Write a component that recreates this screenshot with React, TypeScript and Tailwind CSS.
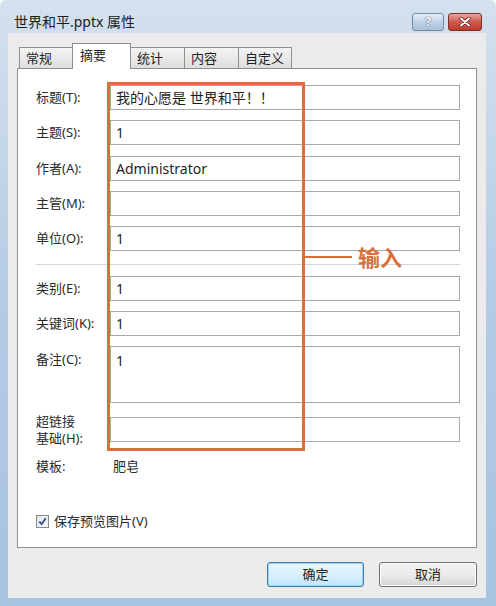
import React from "react";

const font = "font-['Noto_Sans','Noto_Sans_CJK_SC',sans-serif]";

// 一行：标签 + 输入框
const Field = ({
  label,
  value,
  tall,
}: {
  label: React.ReactNode;
  value?: string;
  tall?: boolean;
}) => (
  <div className={`flex ${tall ? "items-start" : "h-[25px] items-center"}`}>
    <div className={`w-[74px] shrink-0 text-[13px] leading-[17px] text-[#2a2a2a] ${tall ? "pt-[5px]" : ""}`}>
      {label}
    </div>
    <div
      className={`w-[350px] ${tall ? "h-[57px] items-start pt-[3px]" : "h-[25px] items-center"} flex shrink-0 border border-[#a8a8a8] bg-white px-[5px] text-[14px] text-[#1e1e1e]`}
    >
      {value}
    </div>
  </div>
);

const Tab = ({ label, active, w }: { label: string; active?: boolean; w: string }) =>
  active ? (
    <div
      className={`${w} relative z-10 -mb-px h-[26px] border border-b-0 border-[#8e8f8f] bg-white pl-[7px] pt-[2px] text-[13px] text-[#1e1e1e]`}
    >
      {label}
    </div>
  ) : (
    <div
      className={`${w} h-[21px] border border-[#8e8f8f] border-b-0 bg-linear-to-b from-[#f4f4f4] to-[#dedede] pl-[6px] pt-[1px] text-[13px] leading-[18px] text-[#1e1e1e] -ml-px first:ml-0`}
    >
      {label}
    </div>
  );

export default function App() {
  return (
    <div
      className={`relative flex h-[606px] w-[496px] flex-col overflow-hidden rounded-t-[6px] bg-linear-to-b from-[#d4e1ee] via-[#b3cbe5] to-[#a7c3e2] ${font}`}
    >
      {/* title bar */}
      <div className="flex h-[33px] items-center pl-[14px] pr-[14px] pt-[10px]">
        <span className="text-[14px] text-[#1b1b1b]">世界和平.pptx 属性</span>
        <div className="ml-auto flex gap-[4px]">
          <div className="flex h-[18px] w-[32px] items-center justify-center rounded-[3px] border border-[#6f8aa8] bg-linear-to-b from-[#e6eef7] via-[#c0d2e6] to-[#a9c0da]">
            <span className="text-[13px] font-bold leading-none text-[#f4f7fb] [text-shadow:0_0_1px_#48607c,0_0_1px_#48607c]">?</span>
          </div>
          <div className="flex h-[18px] w-[34px] items-center justify-center rounded-[3px] border border-[#7a2f2a] bg-linear-to-b from-[#e8a49c] via-[#cf5a4e] to-[#c0392d]">
            <svg width="12" height="10" viewBox="0 0 12 10">
              <path d="M2 1.5 L10 8.5 M10 1.5 L2 8.5" stroke="#5b1a14" strokeWidth="3.4" strokeLinecap="round" />
              <path d="M2 1.5 L10 8.5 M10 1.5 L2 8.5" stroke="#ffffff" strokeWidth="2" strokeLinecap="round" />
            </svg>
          </div>
        </div>
      </div>

      {/* client area */}
      <div className="ml-[8px] mr-[10px] flex flex-1 flex-col bg-[#ebebeb] px-[9px] pt-[10px]">
        <div className="flex h-[25px] items-end pl-[2px]">
          <Tab label="常规" w="w-[54px]" />
          <Tab label="摘要" active w="w-[59px] -ml-px" />
          <Tab label="统计" w="w-[55px]" />
          <Tab label="内容" w="w-[55px]" />
          <Tab label="自定义" w="w-[54px]" />
        </div>

        <div className="flex h-[480px] flex-col border border-[#8e8f8f] bg-white pl-[18px] pr-[16px] pt-[16px]">
          <div className="flex flex-col gap-[10.25px]">
            <Field label="标题(T):" value="我的心愿是 世界和平！！" />
            <Field label="主题(S):" value="1" />
            <Field label="作者(A):" value="Administrator" />
            <Field label="主管(M):" />
            <Field label="单位(O):" value="1" />
          </div>
          <div className="mb-[11px] mt-[13px] h-px bg-[#d6d6d6]" />
          <div className="flex flex-col gap-[10px]">
            <Field label="类别(E):" value="1" />
            <Field label="关键词(K):" value="1" />
            <Field label="备注(C):" value="1" tall />
          </div>
          <div className="mt-[14px]">
            <Field
              label={
                <>
                  超链接
                  <br />
                  基础(H):
                </>
              }
            />
          </div>
          <div className="mt-[15px] flex text-[13px] leading-[18px] text-[#2a2a2a]">
            <span className="w-[77px]">模板:</span>
            <span>肥皂</span>
          </div>
          <div className="mt-[37px] flex items-center gap-[5px] text-[13px] text-[#2a2a2a]">
            <div className="flex h-[13px] w-[13px] items-center justify-center border border-[#8a8a8a] bg-linear-to-br from-[#dfe6f0] to-[#f7f9fc]">
              <svg width="9" height="9" viewBox="0 0 9 9">
                <path d="M1.2 4.6 L3.6 7 L7.8 1.2" fill="none" stroke="#3b4f86" strokeWidth="1.8" />
              </svg>
            </div>
            <span>保存预览图片(V)</span>
          </div>
        </div>

        <div className="mt-[14px] flex justify-end gap-[15px]">
          <button className="h-[25px] w-[97px] rounded-[3px] border border-[#3d7bad] bg-linear-to-b from-[#eaf6fd] via-[#d9f0fc] to-[#bee6fd] text-[13px] text-[#1e1e1e] shadow-[inset_0_0_0_1px_#9bd5f5]">
            确定
          </button>
          <button className="h-[25px] w-[98px] rounded-[3px] border border-[#707070] bg-linear-to-b from-[#f2f2f2] via-[#ebebeb] to-[#d6d6d6] text-[13px] text-[#1e1e1e] shadow-[inset_0_0_0_1px_#fcfcfc]">
            取消
          </button>
        </div>
      </div>
      <div className="h-[8px]" />

      {/* annotation overlay */}
      <div className="absolute left-[107px] top-[82px] h-[369px] w-[198px] border-[3px] border-[#d8703c]" />
      <div className="absolute left-[305px] top-[256px] h-[2px] w-[47px] bg-[#d8703c]" />
      <div className="absolute left-[358px] top-[242px] text-[22px] font-bold leading-[30px] text-[#d8703c]">
        输入
      </div>
    </div>
  );
}
